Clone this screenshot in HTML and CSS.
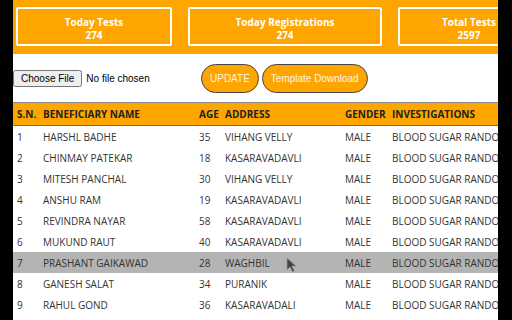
FILE: index.html
```
<!DOCTYPE html>
<html lang="en">

<head>
    <meta charset="UTF-8">
    <meta name="viewport" content="width=device-width, initial-scale=1.0">
    <title>Lab Dashboard</title>
    <link rel="stylesheet" href="styles.css">
</head>

<body>
    <div class="page">
        <div class="stats">
            <div class="stat-card card-tests">
                <h3>Today Tests</h3>
                <p>274</p>
            </div>
            <div class="stat-card card-reg">
                <h3>Today Registrations</h3>
                <p>274</p>
            </div>
            <div class="stat-card card-total">
                <h3>Total Tests</h3>
                <p>2597</p>
            </div>
        </div>

        <div class="upload-bar">
            <input class="file-input" type="file">
            <button class="pill-btn">UPDATE</button>
            <button class="pill-btn">Template Download</button>
        </div>

        <table class="patients">
            <colgroup>
                <col class="c-sn">
                <col class="c-name">
                <col class="c-age">
                <col class="c-addr">
                <col class="c-gender">
                <col class="c-inv">
            </colgroup>
            <thead>
                <tr>
                    <th>S.N.</th>
                    <th>BENEFICIARY NAME</th>
                    <th>AGE</th>
                    <th>ADDRESS</th>
                    <th>GENDER</th>
                    <th>INVESTIGATIONS</th>
                </tr>
            </thead>
            <tbody>
                <tr><td>1</td><td>HARSHL BADHE</td><td>35</td><td>VIHANG VELLY</td><td>MALE</td><td>BLOOD SUGAR RANDOM</td></tr>
                <tr><td>2</td><td>CHINMAY PATEKAR</td><td>18</td><td>KASARAVADAVLI</td><td>MALE</td><td>BLOOD SUGAR RANDOM</td></tr>
                <tr><td>3</td><td>MITESH PANCHAL</td><td>30</td><td>VIHANG VELLY</td><td>MALE</td><td>BLOOD SUGAR RANDOM</td></tr>
                <tr><td>4</td><td>ANSHU RAM</td><td>19</td><td>KASARAVADAVLI</td><td>MALE</td><td>BLOOD SUGAR RANDOM</td></tr>
                <tr><td>5</td><td>REVINDRA NAYAR</td><td>58</td><td>KASARAVADAVLI</td><td>MALE</td><td>BLOOD SUGAR RANDOM</td></tr>
                <tr><td>6</td><td>MUKUND RAUT</td><td>40</td><td>KASARAVADAVLI</td><td>MALE</td><td>BLOOD SUGAR RANDOM</td></tr>
                <tr class="hovered"><td>7</td><td>PRASHANT GAIKAWAD</td><td>28</td><td>WAGHBIL</td><td>MALE</td><td>BLOOD SUGAR RANDOM</td></tr>
                <tr><td>8</td><td>GANESH SALAT</td><td>34</td><td>PURANIK</td><td>MALE</td><td>BLOOD SUGAR RANDOM</td></tr>
                <tr><td>9</td><td>RAHUL GOND</td><td>36</td><td>KASARAVADALI</td><td>MALE</td><td>BLOOD SUGAR RANDOM</td></tr>
            </tbody>
        </table>

        <!-- mouse pointer resting on the hovered row -->
        <svg class="cursor" width="12" height="16" viewBox="0 0 12 16">
            <path d="M1 1 L1 13 L4 10 L6.5 15 L8.5 14 L6 9 L10 9 Z" fill="#444" stroke="#999" stroke-width="0.8" />
        </svg>
    </div>
</body>

</html>
```

FILE: styles.css
```
* {
    box-sizing: border-box;
}

body {
    margin: 0;
    background: #000;
    height: 320px;
    overflow: hidden;
}

.page {
    position: relative;
    margin-left: 13px;
    width: 485px;
    height: 320px;
    overflow: hidden;
    background: #fff;
    font-family: "Open Sans", "Noto Sans", sans-serif;
}

.stats {
    display: flex;
    gap: 16px;
    padding: 7px 3px 8px 3px;
    background: #FFA500;
    width: 560px;
}

.stat-card {
    flex: none;
    height: 39px;
    border: 2px solid #fff;
    border-radius: 2px;
    color: #fff;
    text-align: center;
    padding-top: 7px;
}

.card-tests {
    width: 156px;
}

.card-reg {
    width: 194px;
}

.card-total {
    width: 142px;
}

.stat-card h3,
.stat-card p {
    margin: 0;
    font-size: 10px;
    font-weight: 700;
    line-height: 13px;
}

.upload-bar {
    display: flex;
    align-items: center;
    height: 48px;
    padding-top: 1px;
}

.file-input {
    font-family: "Liberation Sans", Arial, sans-serif;
    font-size: 10px;
    width: 188px;
}

.pill-btn {
    height: 29px;
    padding: 0 8px;
    margin-right: 3px;
    border: 1.5px solid #444;
    border-radius: 15px;
    background: #FFA500;
    color: #fff4e0;
    font-family: "Liberation Sans", Arial, sans-serif;
    font-size: 10px;
    cursor: pointer;
}

.patients {
    border-collapse: collapse;
    table-layout: fixed;
    width: 560px;
    font-size: 10px;
    color: #333;
    border-top: 1px solid #888;
}

.c-sn { width: 26px; }
.c-name { width: 156px; }
.c-age { width: 26px; }
.c-addr { width: 120px; }
.c-gender { width: 47px; }
.c-inv { width: 185px; }

.patients th {
    background: #FFA500;
    color: #222;
    font-weight: 700;
    text-align: left;
    height: 23px;
    padding: 0 4px;
    border-bottom: 1px solid #a06a00;
    white-space: nowrap;
}

.patients td {
    height: 21px;
    padding: 1px 4px 0 4px;
    white-space: nowrap;
    overflow: hidden;
}

.patients tr.hovered td {
    background: #b4b4b4;
}

.cursor {
    position: absolute;
    left: 273px;
    top: 257px;
}
```
